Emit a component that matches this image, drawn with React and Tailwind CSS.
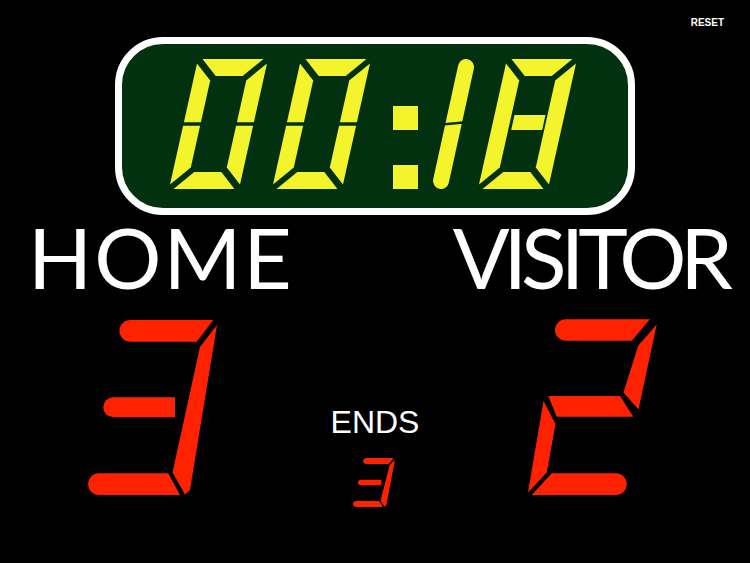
import React from "react";

const YEL = "#f4f42c";
const GRN = "#01310f";
const RED = "#ff2200";

const W = 70, H = 130, T = 17, G = 3.5, D = 4.5, K = 0.223;

function clockSegs(x0, y0, variant) {
  const P = (u, v) => `${(x0 + u + K * (H - v)).toFixed(2)},${(y0 + v).toFixed(2)}`;
  const poly = (pts) => pts.map(([u, v]) => P(u, v)).join(" ");
  const h2 = H / 2;
  const a = [[D, 0], [W - D, 0], [W - T - D, T], [T + D, T]];
  const d = [[T + D, H - T], [W - T - D, H - T], [W - D, H], [D, H]];
  if (variant === "zero") {
    return [
      a,
      [[W, D], [W, h2 - G / 2], [W - T, h2 - G / 2], [W - T, T + D]],
      [[W - T, h2 + G / 2], [W, h2 + G / 2], [W, H - D], [W - T, H - T - D]],
      d,
      [[0, h2 + G / 2], [T, h2 + G / 2], [T, H - T - D], [0, H - D]],
      [[0, D], [T, T + D], [T, h2 - G / 2], [0, h2 - G / 2]],
    ].map(poly);
  }
  return [
    a,
    [[W, D], [W, H - D], [W - T, H - T - D], [W - T, T + D]],
    d,
    [[0, D], [T, T + D], [T, H - T - D], [0, H - D]],
    [[20, 56], [51, 56], [51, 71], [20, 71]],
  ].map(poly);
}

function Three({ fill = RED }) {
  return (
    <g fill={fill}>
      <path d="M42.3,0 L125.3,0 L108.7,21.7 L42.3,21.7 A10.85,10.85 0 0 1 42.3,0 Z" />
      <polygon points="129,5 112,27 84.5,152.5 97,174.5 102,170" />
      <path d="M25.3,77.3 L87,77.3 L87,97.3 L25.3,97.3 A10,10 0 0 1 25.3,77.3 Z" />
      <path d="M11,153.3 L80.3,153.3 L92,175 L11,175 A10.85,10.85 0 0 1 11,153.3 Z" />
    </g>
  );
}

function Clock() {
  const digits = [
    ...clockSegs(169, 59, "zero"),
    ...clockSegs(272, 59, "zero"),
    ...clockSegs(478, 59, "mid"),
  ];
  return (
    <svg width="506" height="164" viewBox="122 44 506 164" role="img" aria-label="00:18" className="block">
      <g fill={YEL}>
        {digits.map((p, i) => (
          <polygon key={i} points={p} />
        ))}
        <rect x="393" y="106" width="25" height="24" />
        <rect x="393" y="165" width="25" height="24" />
      </g>
      <line x1="466" y1="67" x2="441" y2="181" stroke={YEL} strokeWidth="16" strokeLinecap="round" />
      <polygon points="440,123.5 476,120 476,122.5 440,126" fill={GRN} />
    </svg>
  );
}

export default function App() {
  return (
    <div className="w-[750px] h-[563px] bg-black overflow-hidden flex flex-col select-none">
      <div className="h-[37px] flex justify-end pt-[18px] pr-[26px]">
        <span className="text-white text-[10px] leading-[10px] font-bold" style={{ fontFamily: '"Liberation Sans", Arial, sans-serif' }}>
          RESET
        </span>
      </div>
      <div className="mx-auto w-[520px] h-[178px] rounded-[48px] border-[7px] border-white bg-[#01310f] overflow-hidden">
        <Clock />
      </div>
      <div
        className="h-[84px] flex justify-between pl-[28px] pr-[23px] text-white text-[84px] leading-[84px] font-normal"
        style={{ fontFamily: 'Lato, "Open Sans", sans-serif' }}
      >
        <span className="tracking-[2px]">HOME</span>
        <span className="tracking-[-6px]">VISITOR</span>
      </div>
      <div className="flex pt-[19px]">
        <svg width="137" height="182" viewBox="0 0 137 182" className="block ml-[85px]" role="img" aria-label="3">
          <g transform="translate(3,2)">
            <Three />
          </g>
        </svg>
        <div className="w-[302px] flex flex-col items-center pl-[4px] pt-[88px]">
          <span className="text-white text-[32px] leading-[32px]" style={{ fontFamily: '"Liberation Sans", Arial, sans-serif' }}>
            ENDS
          </span>
          <svg width="44" height="52" viewBox="0 0 44 52" className="block mt-[20px]" role="img" aria-label="3">
            <g transform="translate(0,0) scale(0.326,0.28)">
              <Three />
            </g>
          </svg>
        </div>
        <svg width="140" height="182" viewBox="524 318 140 182" className="block" role="img" aria-label="2">
          <g fill={RED}>
            <path d="M565.7,319.3 L650,319.3 L631.7,340.7 L565.7,340.7 A10.7,10.7 0 0 1 565.7,319.3 Z" />
            <polygon points="656.7,324.5 638.2,345.8 623.5,392.5 638.5,409.5" />
            <polygon points="548.3,396 620,396 633.3,416.7 556.7,416.7" />
            <polygon points="543.5,401 555.5,424 546.8,472.5 528,492.5" />
            <path d="M551.7,473.3 L615.9,473.3 A10.85,10.85 0 0 1 615.9,495 L531.7,495 Z" />
          </g>
        </svg>
      </div>
    </div>
  );
}
